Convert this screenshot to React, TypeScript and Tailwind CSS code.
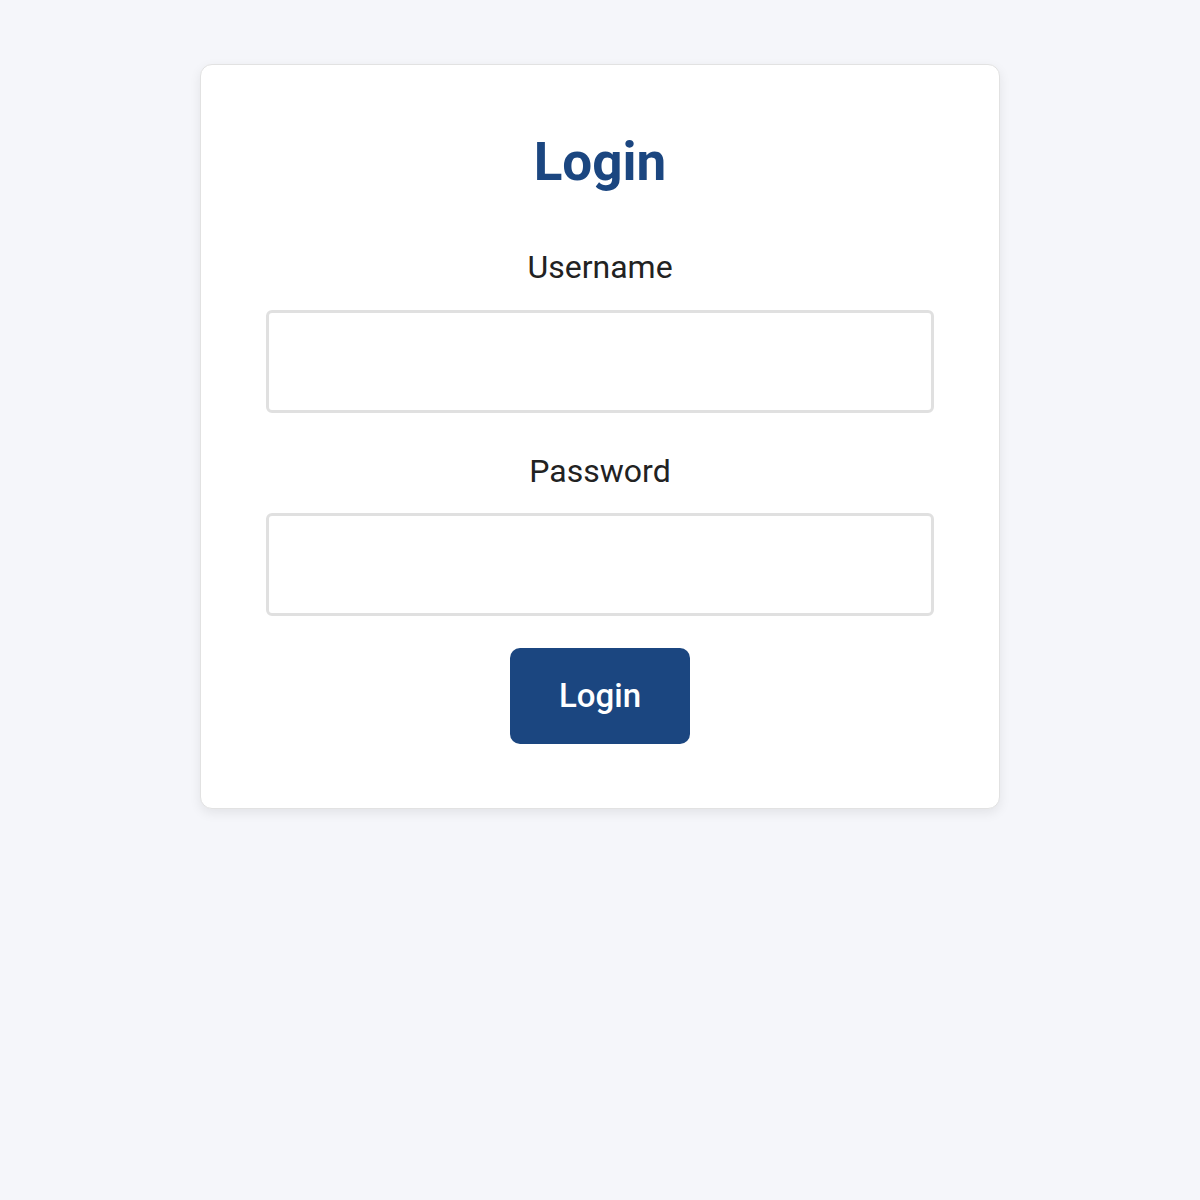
export default function App() {
  return (
    <div className="min-h-screen bg-[#f5f6fa] pt-16 font-['Roboto',sans-serif]">
      <div className="mx-auto w-[800px] rounded-xl border border-[#e2e2e2] bg-white px-16 pt-16 pb-16 shadow-[0_4px_12px_rgba(0,0,0,0.08)]">
        <h1 className="text-center text-[53px] leading-[66px] font-bold text-[#1b4680]">Login</h1>
        <form className="mt-[48px] flex flex-col items-stretch" onSubmit={(e) => e.preventDefault()}>
          <label htmlFor="username" className="text-center text-[32px] leading-[48px] text-[#222]">
            Username
          </label>
          <input
            id="username"
            type="text"
            className="mx-px mt-[19px] h-[103px] rounded-md border-[3px] border-[#e0e0e0] px-4 text-[28px] outline-none"
          />
          <label htmlFor="password" className="mt-[34px] text-center text-[32px] leading-[48px] text-[#222]">
            Password
          </label>
          <input
            id="password"
            type="password"
            className="mx-px mt-[18px] h-[103px] rounded-md border-[3px] border-[#e0e0e0] px-4 text-[28px] outline-none"
          />
          <button
            type="submit"
            className="mx-auto mt-[32px] h-[96px] w-[180px] rounded-[10px] bg-[#1b4680] text-[33px] font-medium text-white"
          >
            Login
          </button>
        </form>
      </div>
    </div>
  );
}
